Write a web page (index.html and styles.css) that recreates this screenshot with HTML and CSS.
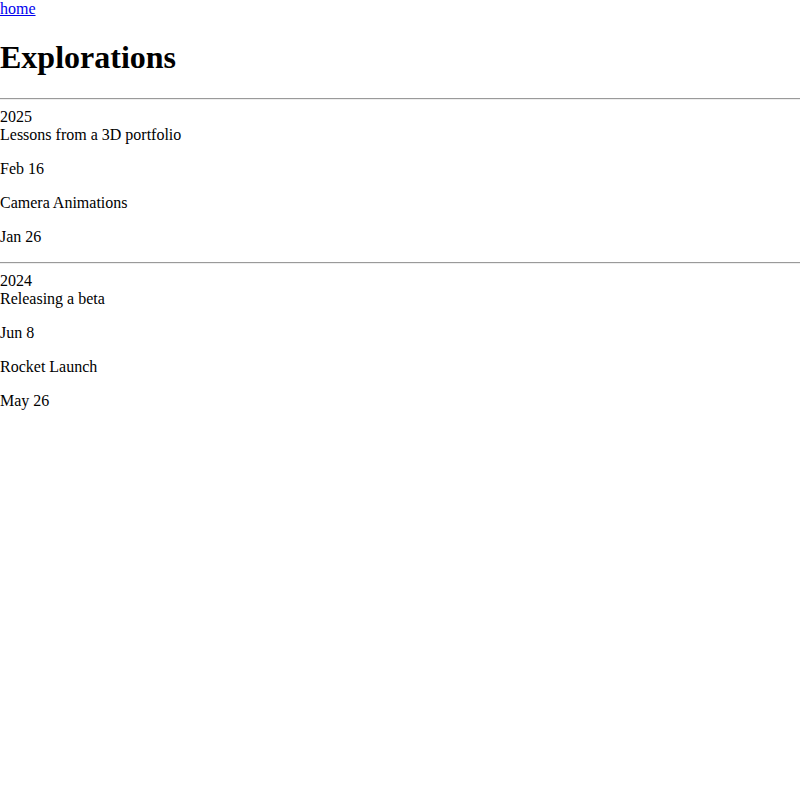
FILE: index.html
```html
<!DOCTYPE html>
<html>
<head>
<meta charset="utf-8">
<title>Explorations</title>
<link rel="stylesheet" href="styles.css">
</head>
<body>
<a class="home" href="#">home</a>
<h1 class="title">Explorations</h1>
<section class="group">
<hr class="rule">
<div class="year">2025</div>
<div class="items">
<p class="item-title">Lessons from a 3D portfolio</p>
<p class="item-date">Feb 16</p>
<p class="item-title">Camera Animations</p>
<p class="item-date">Jan 26</p>
</div>
</section>
<section class="group">
<hr class="rule">
<div class="year">2024</div>
<div class="items">
<p class="item-title">Releasing a beta</p>
<p class="item-date">Jun 8</p>
<p class="item-title">Rocket Launch</p>
<p class="item-date">May 26</p>
</div>
</section>
</body>
</html>
```
FILE: styles.css
```css
body {
  margin: 0;
  font-family: "Liberation Serif", "Times New Roman", serif;
  font-size: 16px;
  color: #000;
  background: #fff;
}
.home {
  color: #0000ee;
  text-decoration: underline;
}
.title {
  font-size: 32px;
  font-weight: bold;
  margin: 21.44px 0;
}
.rule {
  margin: 8px 0;
  border: 0;
  border-top: 1px solid #9a9a9a;
  border-bottom: 1px solid #eeeeee;
  height: 0;
}
.items p {
  margin: 16px 0;
}
.items p:first-child {
  margin-top: 0;
}
```
